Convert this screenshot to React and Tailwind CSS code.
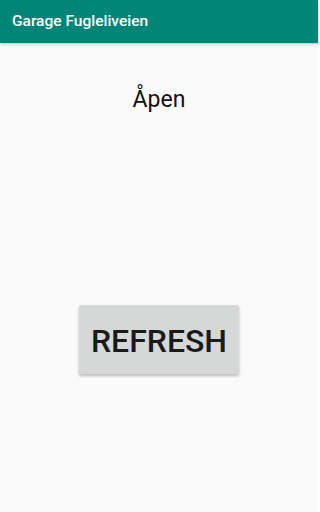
import React from 'react'

const App = () => (
  <div className="w-[318px] h-[512px] bg-[#fafafa] flex flex-col font-['Roboto',sans-serif]">
    {/* App bar */}
    <div className="h-[43px] bg-[#008577] flex items-center px-3 shadow-[0_1px_3px_rgba(0,0,0,0.25)]">
      <span className="text-white text-[15.5px] font-medium">Garage Fugleliveien</span>
    </div>

    {/* Status */}
    <div className="flex justify-center pt-[43px]">
      <span className="text-[23px] leading-[28px] text-[#111]">Åpen</span>
    </div>

    {/* Refresh button */}
    <div className="flex justify-center pt-[191px]">
      <button className="w-[160px] h-[69px] pt-[2px] bg-[#d6d7d7] rounded-[2px] shadow-[0_2px_3px_rgba(0,0,0,0.25)] text-[32px] font-medium text-[#1a1a1a]">
        REFRESH
      </button>
    </div>
  </div>
)

export default App
